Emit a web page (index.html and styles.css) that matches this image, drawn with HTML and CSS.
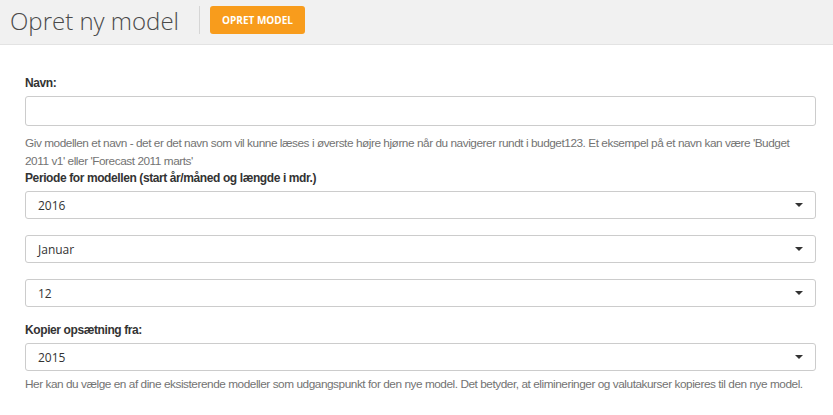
FILE: index.html
```html
<!DOCTYPE html>
<html>
<head>
<meta charset="utf-8">
<link rel="stylesheet" href="styles.css">
</head>
<body>
<header class="topbar">
  <h1 class="title">Opret ny model</h1>
  <span class="sep"></span>
  <button class="btn-primary">OPRET MODEL</button>
</header>
<main class="content">
  <div class="group group-name">
    <label class="label">Navn:</label>
    <div class="input"></div>
    <p class="help">Giv modellen et navn - det er det navn som vil kunne læses i øverste højre hjørne når du navigerer rundt i budget123. Et eksempel på et navn kan være 'Budget 2011 v1' eller 'Forecast 2011 marts'</p>
  </div>
  <div class="group group-period">
    <label class="label">Periode for modellen (start år/måned og længde i mdr.)</label>
    <div class="selects">
      <div class="select"><span>2016</span><i class="caret"></i></div>
      <div class="select"><span>Januar</span><i class="caret"></i></div>
      <div class="select"><span>12</span><i class="caret"></i></div>
    </div>
  </div>
  <div class="group group-copy">
    <label class="label">Kopier opsætning fra:</label>
    <div class="select"><span>2015</span><i class="caret"></i></div>
    <p class="help">Her kan du vælge en af dine eksisterende modeller som udgangspunkt for den nye model. Det betyder, at elimineringer og valutakurser kopieres til den nye model.</p>
  </div>
</main>
</body>
</html>
```

FILE: styles.css
```css
* { box-sizing: border-box; }
body {
  margin: 0;
  background: #fff;
  font-family: "Liberation Sans", Arial, sans-serif;
  color: #333;
}
.topbar {
  height: 45px;
  background: #f1f1f1;
  border-bottom: 1px solid #e3e3e3;
  display: flex;
  align-items: center;
  padding-left: 10px;
}
.title {
  margin: 0;
  font-family: "Open Sans", sans-serif;
  font-weight: 300;
  font-size: 24px;
  color: #4a4a4a;
  line-height: 30px;
  margin-top: -2px;
}
.sep {
  width: 1px;
  height: 28px;
  background: #d6d6d6;
  margin: 0 10px 0 20px;
  margin-top: -5px;
}
.btn-primary {
  margin-top: -5px;
  height: 28px;
  width: 95px;
  border: none;
  border-radius: 3px;
  background: #f89c1c;
  color: #fff;
  font-family: "Open Sans", sans-serif;
  font-weight: 700;
  font-size: 10px;
  padding: 0;
  letter-spacing: 0;
}
.content {
  padding: 30px 17px 0 25px;
}
.label {
  display: block;
  font-weight: bold;
  font-size: 12px;
  line-height: 17px;
  color: #333;
  letter-spacing: -0.4px;
}
.group-name .label { margin-bottom: 4px; }
.input {
  height: 30px;
  border: 1px solid #ccc;
  border-radius: 3px;
  background: #fff;
}
.help {
  margin: 8px 0 0;
  font-size: 11.8px;
  line-height: 18px;
  color: #737373;
  letter-spacing: -0.45px;
}
.group-name .help { padding-right: 12px; }
.group-period { margin-top: 0; }
.group-period .label { margin-bottom: 4px; }
.selects {
  display: flex;
  flex-direction: column;
  gap: 16px;
}
.select {
  height: 28px;
  border: 1px solid #ccc;
  border-radius: 3px;
  background: #fff;
  display: flex;
  align-items: center;
  justify-content: space-between;
  padding: 0 12px 0 12px;
  font-family: "Open Sans", sans-serif;
  font-size: 12px;
  color: #333;
}
.caret {
  width: 0;
  height: 0;
  border-left: 4px solid transparent;
  border-right: 4px solid transparent;
  border-top: 4px solid #333;
  margin-right: 0;
}
.group-copy { margin-top: 15px; }
.group-copy .label { margin-bottom: 4px; }
.group-copy .help { margin-top: 4px; }
```
